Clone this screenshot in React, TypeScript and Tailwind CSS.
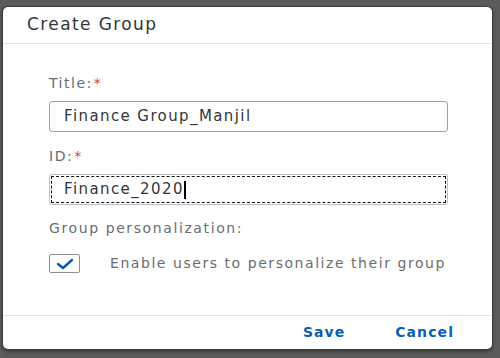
import React from "react";

export default function App() {
  const font = { fontFamily: '"DejaVu Sans", "Liberation Sans", sans-serif' };
  return (
    <div className="w-[500px] h-[358px] bg-[#5b5b5b] pt-[7px] pl-[3px] overflow-hidden" style={font}>
      <div className="w-[489px] h-[342px] bg-white rounded-[5px] shadow-[0_0_0_1px_#3c3c3c,0_2px_4px_rgba(0,0,0,0.5)] flex flex-col">
        <div className="h-[37px] flex items-center pl-[24px] border-b border-[#e2e2e2] shrink-0">
          <span className="text-[17px] text-[#32363a] tracking-[1.4px]">Create Group</span>
        </div>
        <div className="flex-1 pl-[46px] pt-[31px]">
          <div className="text-[14px] leading-[17px] text-[#6a6d70] tracking-[1.5px]">
            Title:<span className="text-[#e0353c] ml-[1px]">*</span>
          </div>
          <div className="mt-[9px] w-[399px] h-[31px] border border-[#9aa1a9] rounded-[3px] flex items-center pl-[14px] text-[15px] text-[#32363a] tracking-[1.4px]">
            Finance Group_Manjil
          </div>
          <div className="mt-[16px] text-[14px] leading-[17px] text-[#6a6d70] tracking-[1.5px]">
            ID:<span className="text-[#e0353c] ml-[1px]">*</span>
          </div>
          <div className="mt-[9px] w-[399px] h-[31px] border border-[#b9bec4] rounded-[3px] outline-dashed outline-[1.5px] outline-[#111] outline-offset-[-3px] flex items-center pl-[14px] text-[15px] text-[#32363a] tracking-[1.4px]">
            Finance_2020<span className="inline-block w-[2px] h-[18px] bg-black" />
          </div>
          <div className="mt-[15px] text-[14px] leading-[17px] text-[#6a6d70] tracking-[1.6px]">Group personalization:</div>
          <div className="mt-[16px] flex items-center">
            <div className="w-[31px] h-[19px] border border-[#89919a] rounded-[2px] flex items-center justify-center">
              <svg width="20" height="12" viewBox="0 0 20 12">
                <path d="M3 6 L8 10 L17 2" fill="none" stroke="#0a5aa8" strokeWidth="2.4" strokeLinecap="round" strokeLinejoin="round" />
              </svg>
            </div>
            <span className="ml-[30px] text-[14px] text-[#6a6d70] tracking-[1.55px]">Enable users to personalize their group</span>
          </div>
        </div>
        <div className="h-[34px] border-t border-[#e2e2e2] flex items-center shrink-0">
          <span className="ml-[300px] text-[14px] font-bold text-[#0a5fb4] tracking-[1px]">Save</span>
          <span className="ml-[50px] text-[14px] font-bold text-[#0a5fb4] tracking-[1.1px]">Cancel</span>
        </div>
      </div>
    </div>
  );
}
